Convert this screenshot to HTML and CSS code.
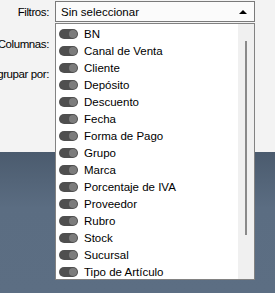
FILE: index.html
```html
<!DOCTYPE html>
<html lang="es">
<head>
    <meta charset="UTF-8">
    <title>Filtros</title>
    <link rel="stylesheet" href="styles.css">
</head>
<body>

<div class="window">
    <div class="form">
        <div class="row">
            <div class="label"><span>Filtros:</span></div>
            <div class="combo">
                <span>Sin seleccionar</span>
                <span class="arrow"></span>
            </div>
        </div>
        <div class="row">
            <div class="label"><span>Columnas:</span></div>
        </div>
        <div class="row">
            <div class="label"><span>Agrupar por:</span></div>
        </div>

        <div class="dropdown">
            <ul class="options">
                <li><span class="toggle"></span>BN</li>
                <li><span class="toggle"></span>Canal de Venta</li>
                <li><span class="toggle"></span>Cliente</li>
                <li><span class="toggle"></span>Depósito</li>
                <li><span class="toggle"></span>Descuento</li>
                <li><span class="toggle"></span>Fecha</li>
                <li><span class="toggle"></span>Forma de Pago</li>
                <li><span class="toggle"></span>Grupo</li>
                <li><span class="toggle"></span>Marca</li>
                <li><span class="toggle"></span>Porcentaje de IVA</li>
                <li><span class="toggle"></span>Proveedor</li>
                <li><span class="toggle"></span>Rubro</li>
                <li><span class="toggle"></span>Stock</li>
                <li><span class="toggle"></span>Sucursal</li>
                <li><span class="toggle"></span>Tipo de Artículo</li>
            </ul>
            <div class="scrollbar">
                <div class="thumb"></div>
            </div>
        </div>
    </div>
    <div class="footer"></div>
</div>

</body>
</html>
```

FILE: styles.css
```css
html, body {
    margin: 0;
    padding: 0;
    height: 100%;
}

body {
    font-family: 'Liberation Sans', Arial, sans-serif;
    font-size: 11.5px;
    color: #000000;
    overflow: hidden;
}

.window {
    display: flex;
    flex-direction: column;
    height: 100%;
}

.form {
    position: relative;
    height: 152px;
    background: #f3f3f3;
    padding-top: 1px;
    box-sizing: border-box;
}

.footer {
    flex: 1;
    background: linear-gradient(180deg, #4b5b6e, #5b6d82 40%, #5c6e83);
}

.row {
    display: flex;
    align-items: center;
    height: 30px;
}

.row:first-child {
    height: 21px;
    margin-bottom: 7px;
}

.label {
    width: 50px;
    display: flex;
    justify-content: flex-end;
    overflow: hidden;
    white-space: nowrap;
    letter-spacing: -0.4px;
    box-sizing: border-box;
    padding-right: 1px;
}

.combo {
    width: 200px;
    height: 21px;
    margin-left: 5px;
    box-sizing: border-box;
    border: 1px solid #7a7a7a;
    background: #fbfbfb;
    display: flex;
    align-items: center;
    justify-content: space-between;
    padding: 0 6px 0 5px;
}

.arrow {
    width: 0;
    height: 0;
    border-left: 4px solid transparent;
    border-right: 4px solid transparent;
    border-bottom: 4px solid #000000;
    margin-right: 1px;
}

/* open list, drawn over the form */
.dropdown {
    position: absolute;
    top: 23px;
    left: 55px;
    width: 200px;
    height: 257px;
    box-sizing: border-box;
    border: 1px solid #828282;
    background: #ffffff;
    display: flex;
    z-index: 2;
}

.options {
    list-style: none;
    margin: 0;
    padding: 1px 0 0 0;
    flex: 1;
}

.options li {
    height: 17px;
    display: flex;
    align-items: center;
    white-space: nowrap;
}

.toggle {
    position: relative;
    width: 19px;
    height: 10px;
    border-radius: 5px;
    background: #4f4f4f;
    margin: 0 6px 0 3px;
    flex-shrink: 0;
}

.toggle::after {
    content: "";
    position: absolute;
    right: 1px;
    top: 1px;
    width: 8px;
    height: 8px;
    border-radius: 50%;
    background: #7c7c7c;
}

.scrollbar {
    width: 16px;
    background: #f0f0f0;
    position: relative;
}

.thumb {
    position: absolute;
    left: 7px;
    top: 17px;
    width: 2px;
    height: 194px;
    background: #8a8a8a;
}
```
